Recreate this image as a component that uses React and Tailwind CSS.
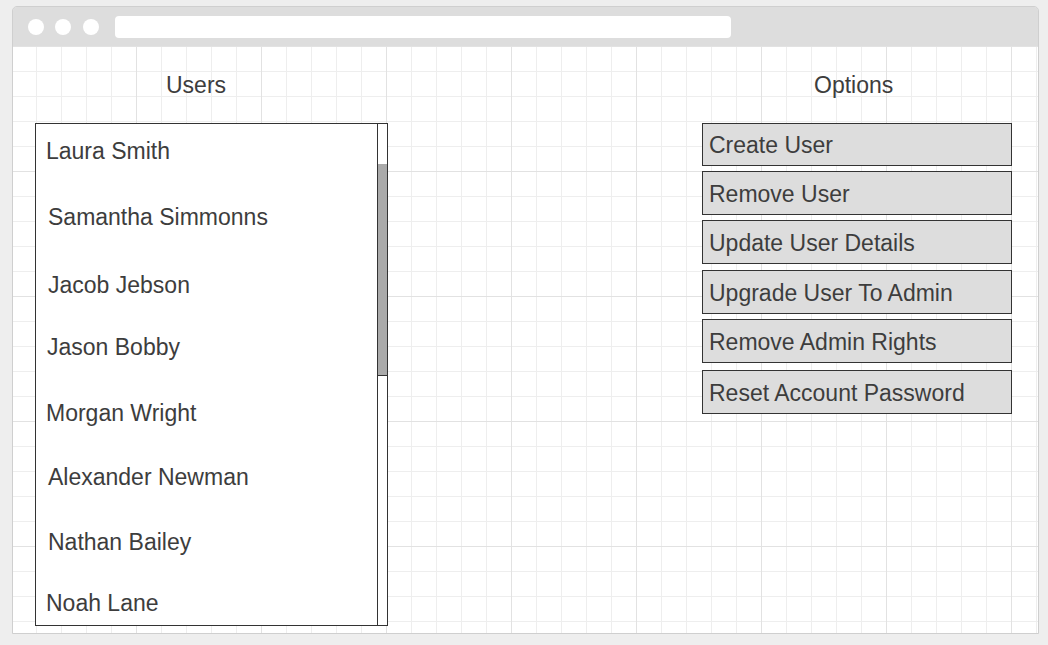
export default function App() {
  const users = [
    { name: "Laura Smith", cls: "mt-[14px] pl-[10px]" },
    { name: "Samantha Simmonns", cls: "mt-[40px] pl-[12px]" },
    { name: "Jacob Jebson", cls: "mt-[42px] pl-[12px]" },
    { name: "Jason Bobby", cls: "mt-[36px] pl-[11px]" },
    { name: "Morgan Wright", cls: "mt-[40px] pl-[10px]" },
    { name: "Alexander Newman", cls: "mt-[38px] pl-[12px]" },
    { name: "Nathan Bailey", cls: "mt-[39px] pl-[12px]" },
    { name: "Noah Lane", cls: "mt-[35px] pl-[10px]" },
  ];
  const options = [
    { label: "Create User", cls: "h-[43px]" },
    { label: "Remove User", cls: "mt-[5px] h-[44px]" },
    { label: "Update User Details", cls: "mt-[5px] h-[44px]" },
    { label: "Upgrade User To Admin", cls: "mt-[6px] h-[44px]" },
    { label: "Remove Admin Rights", cls: "mt-[5px] h-[44px]" },
    { label: "Reset Account Password", cls: "mt-[7px] h-[44px]" },
  ];
  return (
    <div className="w-[1048px] h-[645px] bg-[#eeeeee] pt-[6px] pl-[12px] font-['Liberation_Sans',Arial,sans-serif] text-[#3d3d3d] overflow-hidden">
      <div className="w-[1027px] h-[628px] border border-[#cfcfcf] rounded-t-[5px] flex flex-col overflow-hidden">
        <div className="h-[39px] bg-[#dddddd] flex items-center shrink-0">
          <div className="ml-[15px] w-[16px] h-[16px] rounded-full bg-white" />
          <div className="ml-[11px] w-[16px] h-[16px] rounded-full bg-white" />
          <div className="ml-[12px] w-[16px] h-[16px] rounded-full bg-white" />
          <div className="ml-[16px] w-[616px] h-[22px] rounded-[4px] bg-white" />
        </div>
        <div className="flex-1 bg-white bg-[linear-gradient(to_right,#e2e2e2_1px,transparent_1px),linear-gradient(to_bottom,#e2e2e2_1px,transparent_1px),linear-gradient(to_right,#eeeeee_1px,transparent_1px),linear-gradient(to_bottom,#eeeeee_1px,transparent_1px)] bg-[size:125px_125px,125px_125px,25px_25px,25px_25px] bg-[position:-2px_0px] flex items-start">
          <div className="ml-[22px] w-[353px] flex flex-col">
            <div className="mt-[26px] h-[26px] leading-[26px] text-[23px] pl-[131px]">Users</div>
            <div className="mt-[25px] h-[503px] border border-[#333333] bg-white flex">
              <div className="flex-1 flex flex-col">
                {users.map((u) => (
                  <div key={u.name} className={`h-[26px] leading-[26px] text-[23px] whitespace-nowrap ${u.cls}`}>
                    {u.name}
                  </div>
                ))}
              </div>
              <div className="w-[10px] border-l border-[#333333] flex flex-col">
                <div className="mt-[40px] h-[212px] bg-[#aaaaaa] border-b border-[#333333]" />
              </div>
            </div>
          </div>
          <div className="ml-[314px] w-[310px] flex flex-col">
            <div className="mt-[26px] h-[26px] leading-[26px] text-[23px] pl-[112px]">Options</div>
            <div className="mt-[25px] flex flex-col">
              {options.map((o) => (
                <div
                  key={o.label}
                  className={`border border-[#333333] bg-[#dddddd] flex items-center pl-[6px] pt-[1px] text-[23px] leading-[26px] whitespace-nowrap ${o.cls}`}
                >
                  {o.label}
                </div>
              ))}
            </div>
          </div>
        </div>
      </div>
    </div>
  );
}
